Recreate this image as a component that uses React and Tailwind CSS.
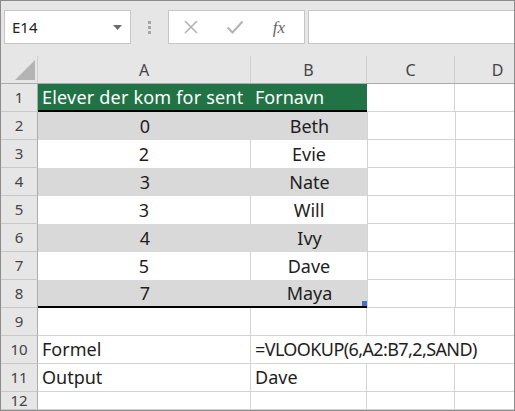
import React from "react";

const FONT = { fontFamily: '"Noto Sans", "Open Sans", sans-serif' };

// Table rows 2-8: [A, B]
const tableRows = [
  ["0", "Beth"],
  ["2", "Evie"],
  ["3", "Nate"],
  ["3", "Will"],
  ["4", "Ivy"],
  ["5", "Dave"],
  ["7", "Maya"],
];

function RowHead({ n, h = "h-[28px]" }) {
  return (
    <div
      className={`w-[37px] shrink-0 ${h} border-r border-b border-r-[#ababab] border-b-[#c8c8c8] bg-[#e6e6e6] flex items-center justify-center text-[15px] text-[#444]`}
    >
      {n}
    </div>
  );
}

function Toolbar() {
  return (
    <div className="h-[55px] bg-[#e6e6e6] flex items-start pt-[9px] pl-[3px]">
      <div className="w-[127px] h-[34px] bg-white border border-[#c6c6c6] flex items-center justify-between pl-[7px] pr-[8px] text-[15px] text-[#222]">
        <span>E14</span>
        <svg width="9" height="5" viewBox="0 0 9 5">
          <path d="M0 0 L9 0 L4.5 5 Z" fill="#6b6b6b" />
        </svg>
      </div>
      <div className="w-[37px] h-[34px] flex flex-col items-center justify-center gap-[2px]">
        <div className="w-[3px] h-[3px] bg-[#a6a6a6]" />
        <div className="w-[3px] h-[3px] bg-[#a6a6a6]" />
        <div className="w-[3px] h-[3px] bg-[#a6a6a6]" />
      </div>
      <div className="w-[137px] h-[34px] bg-white border border-[#c6c6c6] flex items-center">
        <div className="w-[44px] flex justify-center">
          <svg width="16" height="16" viewBox="0 0 16 16">
            <path d="M2 2 L14 14 M14 2 L2 14" stroke="#b3b3b3" strokeWidth="1.6" fill="none" />
          </svg>
        </div>
        <div className="w-[44px] flex justify-center">
          <svg width="18" height="16" viewBox="0 0 18 16">
            <path d="M1.5 8.5 L6.5 13.5 L16.5 2.5" stroke="#b3b3b3" strokeWidth="2" fill="none" />
          </svg>
        </div>
        <div className="w-[44px] flex justify-center">
          <span
            className="italic text-[17px] text-[#666] leading-none"
            style={{ fontFamily: '"Liberation Serif", "DejaVu Serif", serif' }}
          >
            fx
          </span>
        </div>
      </div>
      <div className="ml-[3px] flex-1 h-[34px] bg-white border border-[#c6c6c6] border-r-0" />
    </div>
  );
}

function ColHeaders() {
  const cols = [
    ["A", "w-[213px]"],
    ["B", "w-[116px]"],
    ["C", "w-[88px]"],
    ["D", "w-[86px]"],
  ];
  return (
    <div className="flex h-[28px] bg-[#e6e6e6] border-b border-[#ababab] overflow-hidden">
      <div className="w-[37px] shrink-0 border-r border-[#d0d0d0] relative">
        <svg className="absolute left-[14px] top-[4px]" width="20" height="20" viewBox="0 0 20 20">
          <path d="M20 0 L20 20 L0 20 Z" fill="#b4b4b4" />
        </svg>
      </div>
      {cols.map(([c, w]) => (
        <div
          key={c}
          className={`${w} shrink-0 border-r border-[#d0d0d0] flex items-center justify-center text-[16px] text-[#444]`}
        >
          {c}
        </div>
      ))}
    </div>
  );
}

function Grid() {
  return (
    <div className="text-[18px] text-[#1e1e1e]">
      {/* Row 1: table header */}
      <div className="flex">
        <RowHead n={1} />
        <div className="w-[329px] shrink-0 h-[28px] bg-[#217346] border-b-2 border-black flex items-center text-white">
          <div className="w-[213px] pl-[4px] whitespace-nowrap tracking-[0.2px]">Elever der kom for sent</div>
          <div className="pl-[4px]">Fornavn</div>
        </div>
        <div className="w-[88px] shrink-0 h-[28px] border-r border-b border-[#d4d4d4]" />
        <div className="flex-1 h-[28px] border-b border-[#d4d4d4]" />
      </div>

      {tableRows.map(([a, b], i) => {
        const n = i + 2;
        const shaded = n % 2 === 0;
        const last = n === 8;
        const bg = shaded ? "bg-[#d9d9d9]" : "bg-white";
        const bottom = last ? "border-b-2 border-b-black" : "";
        return (
          <div key={n} className="flex">
            <RowHead n={n} />
            <div
              className={`${shaded ? "w-[214px]" : "w-[213px] border-r border-r-[#d4d4d4]"} shrink-0 h-[28px] ${bg} ${bottom} flex items-center justify-center`}
            >
              {a}
            </div>
            <div
              className={`${shaded ? "w-[115px]" : "w-[116px]"} shrink-0 h-[28px] ${bg} ${bottom} flex items-center justify-center relative`}
            >
              {b}
              {last && (
                <div className="absolute right-0 bottom-0 w-[5px] h-[5px] bg-[#4472c4]" />
              )}
            </div>
            <div className="w-[89px] shrink-0 h-[28px] border-l border-r border-b border-[#d4d4d4]" />
            <div className="flex-1 h-[28px] border-b border-[#d4d4d4]" />
          </div>
        );
      })}

      {/* Rows 9-12 */}
      {[
        [9, "", "", false, "h-[28px]"],
        [10, "Formel", "=VLOOKUP(6,A2:B7,2,SAND)", true, "h-[28px]"],
        [11, "Output", "Dave", false, "h-[28px]"],
        [12, "", "", false, "h-[18px]"],
      ].map(([n, a, b, overflow, h]) => (
        <div key={n} className="flex">
          <RowHead n={n} h={h} />
          <div
            className={`w-[213px] shrink-0 ${h} border-r border-b border-[#d4d4d4] flex items-center pl-[4px]`}
          >
            {a}
          </div>
          {overflow ? (
            <div
              className={`flex-1 ${h} border-b border-[#d4d4d4] flex items-center pl-[4px] whitespace-nowrap tracking-[-0.6px]`}
            >
              {b}
            </div>
          ) : (
            <>
              <div
                className={`w-[116px] shrink-0 ${h} border-r border-b border-[#d4d4d4] flex items-center pl-[4px]`}
              >
                {b}
              </div>
              <div className={`w-[88px] shrink-0 ${h} border-r border-b border-[#d4d4d4]`} />
              <div className={`flex-1 ${h} border-b border-[#d4d4d4]`} />
            </>
          )}
        </div>
      ))}
    </div>
  );
}

export default function App() {
  return (
    <div
      className="w-[515px] h-[411px] border border-[#8c8c8c] bg-white overflow-hidden"
      style={FONT}
    >
      <Toolbar />
      <ColHeaders />
      <Grid />
    </div>
  );
}
